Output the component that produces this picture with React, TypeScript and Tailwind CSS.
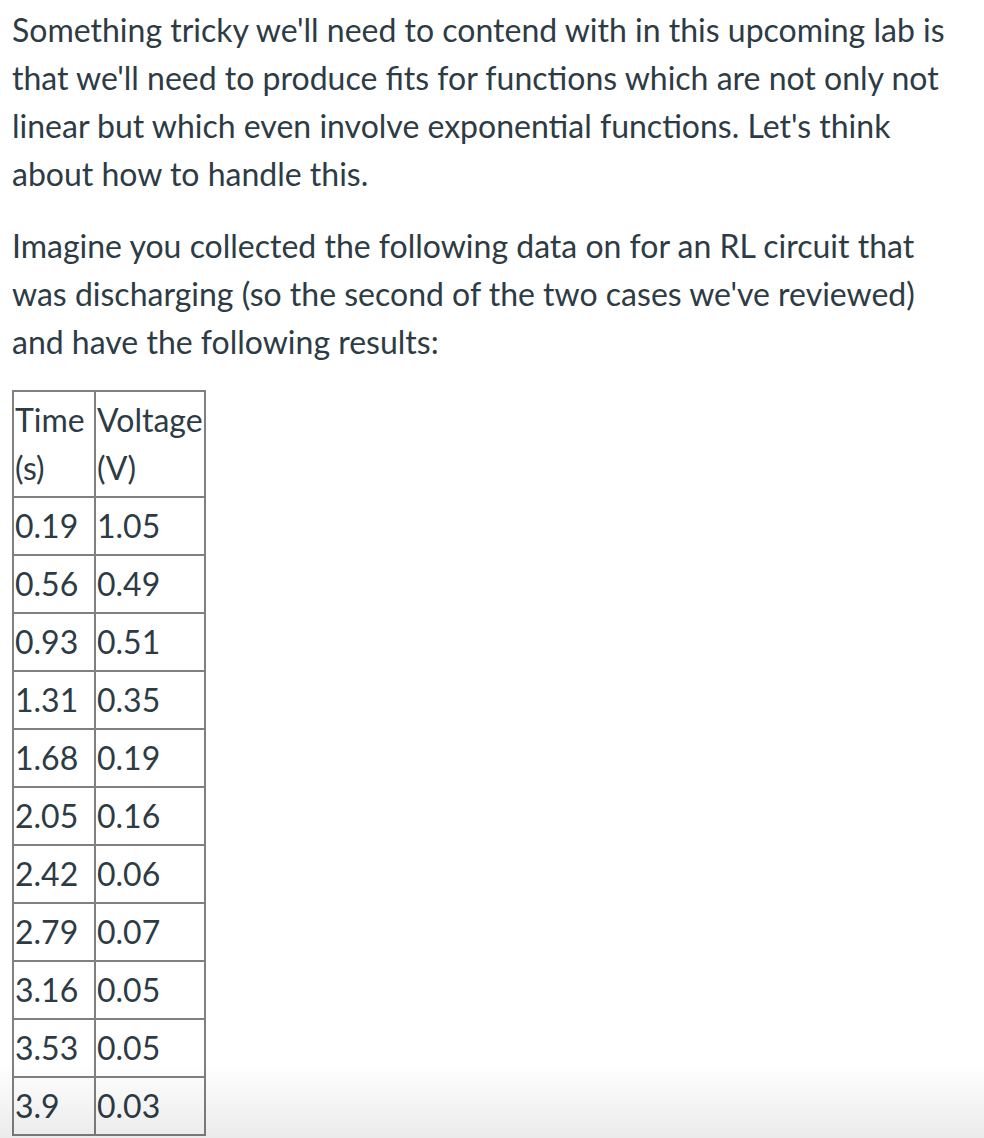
import React from "react";

const rows: [string, string][] = [
  ["0.19", "1.05"],
  ["0.56", "0.49"],
  ["0.93", "0.51"],
  ["1.31", "0.35"],
  ["1.68", "0.19"],
  ["2.05", "0.16"],
  ["2.42", "0.06"],
  ["2.79", "0.07"],
  ["3.16", "0.05"],
  ["3.53", "0.05"],
  ["3.9", "0.03"],
];

export default function App() {
  return (
    <div
      className="relative h-[1138px] w-[984px] overflow-hidden bg-white pl-[12px] pr-[14px] pt-[6px] text-[32px] leading-[48px] text-[#2d3b45]"
      style={{ fontFamily: "Lato, 'Noto Sans', sans-serif" }}
    >
      <p className="m-0">
        Something tricky we'll need to contend with in this upcoming lab is that we'll need to produce fits for
        functions which are not only not linear but which even involve exponential functions. Let's think
        about how to handle this.
      </p>
      <p className="mt-[24px]">
        Imagine you collected the following data on for an RL circuit that was discharging (so the second of
        the two cases we've reviewed) and have the following results:
      </p>
      <table className="mt-[24px] border-collapse border-2 border-[#808080]">
        <thead>
          <tr>
            <th className="w-[82px] border-2 border-[#808080] px-[1px] py-[4px] text-left align-top font-normal">
              Time (s)
            </th>
            <th className="w-[106px] border-2 border-[#808080] px-[1px] py-[4px] text-left align-top font-normal">
              Voltage (V)
            </th>
          </tr>
        </thead>
        <tbody>
          {rows.map(([t, v]) => (
            <tr key={t}>
              <td className="border-2 border-[#808080] px-[1px] py-[4px]">{t}</td>
              <td className="border-2 border-[#808080] px-[1px] py-[4px]">{v}</td>
            </tr>
          ))}
        </tbody>
      </table>
      <div className="pointer-events-none absolute bottom-0 left-0 h-[76px] w-full bg-gradient-to-b from-[rgba(0,0,0,0)] to-[rgba(0,0,0,0.08)]" />
    </div>
  );
}
